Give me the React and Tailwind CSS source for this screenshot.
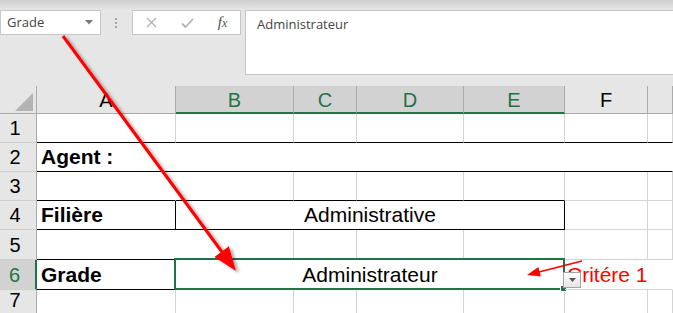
import React from 'react';

const G = 'border-[#d4d4d4]';

function Cell({ w, r = 'grid', b = 'grid', className = '', children, grow = false }) {
  const rc = r === 'black' ? 'border-r-black' : r === 'none' ? 'border-r-white' : 'border-r-[#d4d4d4]';
  const bc = b === 'black' ? 'border-b-black' : 'border-b-[#d4d4d4]';
  return (
    <div
      className={`h-full ${grow ? 'flex-1' : 'shrink-0'} border-r border-b ${rc} ${bc} flex items-end leading-none pb-[4px] text-[21px] text-black whitespace-nowrap ${className}`}
      style={grow ? undefined : { width: w }}
    >
      {children}
    </div>
  );
}

function RowHead({ n, sel = false }) {
  return (
    <div
      className={`w-[37px] h-full shrink-0 border-b border-b-[#cfcfcf] flex items-end justify-center pb-[4px] pr-[6px] leading-none text-[20px] ${
        sel ? 'bg-[#d2d2d2] text-[#217346] border-r-2 border-r-[#217346]' : 'bg-[#e6e6e6] text-black border-r border-r-[#ababab]'
      }`}
    >
      {n}
    </div>
  );
}

function ColHead({ w, l, sel = false, grow = false }) {
  return (
    <div
      className={`h-full ${grow ? 'flex-1' : 'shrink-0'} border-r border-r-[#ababab] flex items-end justify-center leading-none text-[20px] ${
        sel ? 'bg-[#d2d2d2] text-[#217346] border-b-2 border-b-[#217346] pb-[2px]' : 'bg-[#e6e6e6] text-black border-b border-b-[#ababab] pb-[3px]'
      }`}
      style={grow ? undefined : { width: w }}
    >
      {l}
    </div>
  );
}

export default function App() {
  return (
    <div className="relative w-[673px] h-[313px] overflow-hidden bg-[#e6e6e6] font-['Liberation_Sans',Arial,sans-serif]">
      {/* Formula bar */}
      <div className="h-[86px] flex flex-col">
        <div className="h-[10px] bg-gradient-to-b from-[#cfcfcf] to-[#e6e6e6]" />
        <div className="flex items-start">
          <div className="w-[101px] h-[25px] shrink-0 bg-white border border-[#c6c6c6] flex items-center justify-between pl-[6px] pr-[7px] text-[13px] text-[#444] font-['Open_Sans',sans-serif]">
            <span>Grade</span>
            <svg width="8" height="5" viewBox="0 0 8 5">
              <path d="M0 0h8L4 4.5z" fill="#7a7a7a" />
            </svg>
          </div>
          <div className="w-[31px] h-[25px] shrink-0 flex flex-col items-center justify-center gap-[2px] pr-[1px]">
            <span className="w-[2px] h-[2px] bg-[#a6a6a6]" />
            <span className="w-[2px] h-[2px] bg-[#a6a6a6]" />
            <span className="w-[2px] h-[2px] bg-[#a6a6a6]" />
          </div>
          <div className="w-[109px] h-[25px] shrink-0 bg-white border border-[#c6c6c6] flex items-center">
            <div className="w-[36px] flex justify-center">
              <svg width="11" height="11" viewBox="0 0 11 11">
                <path d="M1 1L10 10M10 1L1 10" stroke="#b3b3b3" strokeWidth="1.4" />
              </svg>
            </div>
            <div className="w-[36px] flex justify-center">
              <svg width="13" height="10" viewBox="0 0 13 10">
                <path d="M1 5.5L4.5 9L12 1" stroke="#b3b3b3" strokeWidth="1.8" fill="none" />
              </svg>
            </div>
            <div className="w-[35px] flex justify-center text-[15px] italic text-[#505050] font-['Liberation_Serif',serif] leading-none">
              <span>f<span className="text-[12px]">x</span></span>
            </div>
          </div>
          <div className="ml-[4px] w-[440px] h-[65px] shrink-0 bg-white border border-[#c6c6c6] pl-[11px] pt-[4px] text-[13px] text-[#444] font-['Open_Sans',sans-serif]">
            Administrateur
          </div>
        </div>
      </div>

      {/* Sheet */}
      <div className="flex flex-col bg-white h-[227px]">
        <div className="h-[28px] flex shrink-0">
          <div className="w-[37px] h-full shrink-0 bg-[#e6e6e6] border-r border-b border-[#ababab] flex items-end justify-end pr-[3px] pb-[2px]">
            <svg width="18" height="18" viewBox="0 0 18 18">
              <polygon points="18,0 18,18 0,18" fill="#b4b4b4" />
            </svg>
          </div>
          <ColHead w={139} l="A" />
          <ColHead w={118} l="B" sel />
          <ColHead w={63} l="C" sel />
          <ColHead w={107} l="D" sel />
          <ColHead w={101} l="E" sel />
          <ColHead w={83} l="F" />
          <ColHead grow l="" />
        </div>

        {/* Row 1 */}
        <div className="h-[29px] flex shrink-0">
          <RowHead n="1" />
          <Cell w={139} b="black" />
          <Cell w={118} b="black" />
          <Cell w={63} b="black" />
          <Cell w={107} b="black" />
          <Cell w={101} b="black" />
          <Cell w={83} b="black" />
          <Cell grow b="black" />
        </div>

        {/* Row 2 */}
        <div className="h-[29px] flex shrink-0">
          <RowHead n="2" />
          <Cell grow b="black" r="none" className="pl-[4px] font-bold">
            Agent :
          </Cell>
        </div>

        {/* Row 3 */}
        <div className="h-[29px] flex shrink-0">
          <RowHead n="3" />
          <Cell w={139} r="none" b="black" />
          <Cell w={118} b="black" />
          <Cell w={63} b="black" />
          <Cell w={107} b="black" />
          <Cell w={101} b="black" />
          <Cell w={83} />
          <Cell grow />
        </div>

        {/* Row 4 */}
        <div className="h-[29px] flex shrink-0">
          <RowHead n="4" />
          <Cell w={139} r="black" b="black" className="pl-[4px] font-bold">
            Filière
          </Cell>
          <Cell w={389} r="black" b="black" className="justify-center">
            Administrative
          </Cell>
          <Cell w={83} />
          <Cell grow />
        </div>

        {/* Row 5 */}
        <div className="h-[30px] flex shrink-0">
          <RowHead n="5" />
          <Cell w={139} r="none" b="black" />
          <Cell w={118} b="black" />
          <Cell w={63} b="black" />
          <Cell w={107} b="black" />
          <Cell w={101} r="grid" b="black" />
          <Cell w={83} />
          <Cell grow />
        </div>

        {/* Row 6 */}
        <div className="h-[30px] flex shrink-0">
          <RowHead n="6" sel />
          <Cell w={139} r="black" b="black" className="pl-[4px] font-bold">
            Grade
          </Cell>
          <Cell w={389} r="black" b="black" className="justify-center relative">
            Administrateur
            <div className="absolute -left-[2px] -top-[2px] -right-[1px] -bottom-[1px] border-2 border-[#217346]" />
            <div className="absolute -right-[3px] -bottom-[3px] w-[7px] h-[7px] bg-[#217346] border border-white" />
          </Cell>
          <Cell grow r="none" className="relative pl-[2px] text-[#ff0000]">
            <span className="text-[#ff0000]">Critére 1</span>
            <div className="absolute -left-[2px] top-[12px] w-[18px] h-[16px] bg-gradient-to-b from-white to-[#e4e4e4] border border-[#a6a6a6] flex items-center justify-center">
              <svg width="7" height="4" viewBox="0 0 7 4">
                <path d="M0 0h7L3.5 4z" fill="#555" />
              </svg>
            </div>
          </Cell>
        </div>

        {/* Row 7 */}
        <div className="flex-1 flex">
          <RowHead n="7" />
          <Cell w={139} />
          <Cell w={118} />
          <Cell w={63} />
          <Cell w={107} />
          <Cell w={101} />
          <Cell w={83} />
          <Cell grow />
        </div>
      </div>

      {/* Annotation arrows */}
      <svg className="absolute inset-0 pointer-events-none" width="673" height="313" viewBox="0 0 673 313">
        <defs>
          <filter id="sh" x="-20%" y="-20%" width="140%" height="140%">
            <feDropShadow dx="3" dy="2" stdDeviation="1.6" floodColor="#000" floodOpacity="0.35" />
          </filter>
        </defs>
        <g filter="url(#sh)">
          <line x1="63" y1="36" x2="222" y2="252" stroke="#ff0000" strokeWidth="3" />
          <polygon points="236,271 214.5,257 228.9,246.3" fill="#ff0000" />
        </g>
        <line x1="582" y1="261" x2="539" y2="272" stroke="#ff0000" strokeWidth="1.5" />
        <polygon points="527,275 538.4,267 540.8,276.6" fill="#ff0000" />
      </svg>
    </div>
  );
}
